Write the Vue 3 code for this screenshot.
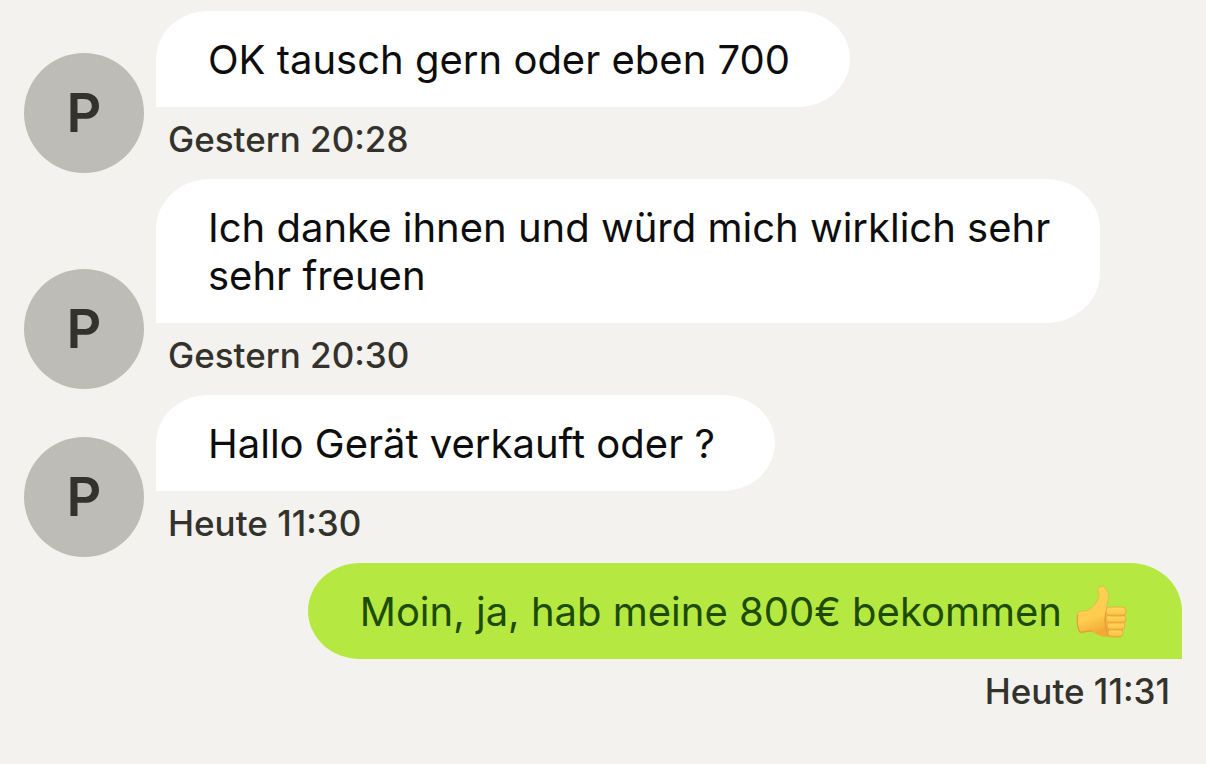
<script setup>
const messages = [
  { id: 1, own: false, text: 'OK tausch gern oder eben 700', time: 'Gestern 20:28' },
  { id: 2, own: false, text: 'Ich danke ihnen und würd mich wirklich sehr sehr freuen', time: 'Gestern 20:30' },
  { id: 3, own: false, text: 'Hallo Gerät verkauft oder ?', time: 'Heute 11:30' },
  { id: 4, own: true, text: 'Moin, ja, hab meine 800€ bekommen', thumb: true, time: 'Heute 11:31' },
]

const isLong = (m) => m.text.length > 40
</script>

<template>
  <main class="chat">
    <article v-for="m in messages" :key="m.id" class="row" :class="{ own: m.own }">
      <div v-if="!m.own" class="avatar">P</div>
      <div class="column">
        <p class="bubble" :class="{ long: isLong(m) }">
          <span>{{ m.text }}</span>
          <svg v-if="m.thumb" class="thumb" viewBox="0 0 52 54" role="img" aria-label="Daumen hoch">
            <defs>
              <linearGradient id="skin" x1="0" y1="0" x2="0.3" y2="1">
                <stop offset="0" stop-color="#ffd45c" />
                <stop offset="0.7" stop-color="#fecb4e" />
                <stop offset="1" stop-color="#f3a934" />
              </linearGradient>
              <linearGradient id="finger" x1="0" y1="0" x2="0" y2="1">
                <stop offset="0" stop-color="#ffd65e" />
                <stop offset="0.7" stop-color="#fdc84a" />
                <stop offset="1" stop-color="#efaa38" />
              </linearGradient>
            </defs>
            <path
              d="M2 27C5 25 10 27 14 24C19 20 22 16 23 11C23 7 21 5 22 3C23 1 27 1 29 3C32 6 33 10 32 15C31 19 30 22 31 25L36 29L38 49C33 53 24 52 18 47C13 45 9 48 4 48C1 45 0 31 2 27Z"
              fill="url(#skin)" stroke="#eaa93c" stroke-width="0.6" />
            <path d="M2 30C1 36 1 42 4 47C8 48 12 45 16 46" fill="none" stroke="#e09a35" stroke-width="1" />
            <path d="M31 25C28 31 29 43 32 51" fill="none" stroke="#e5a13a" stroke-width="1.6" />
            <rect x="32" y="44" width="15" height="8" rx="4" fill="url(#finger)" stroke="#e09a35" stroke-width="0.6" />
            <rect x="31" y="37" width="18" height="8" rx="4" fill="url(#finger)" stroke="#e09a35" stroke-width="0.6" />
            <rect x="30" y="30" width="20" height="8" rx="4" fill="url(#finger)" stroke="#e09a35" stroke-width="0.6" />
            <rect x="30" y="22" width="20" height="9" rx="4" fill="url(#finger)" stroke="#e09a35" stroke-width="0.6" />
          </svg>
        </p>
        <time class="time">{{ m.time }}</time>
      </div>
    </article>
  </main>
</template>

<style>
html,
body {
  background: #f3f2ee;
}
</style>

<style scoped>
.chat {
  display: flex;
  flex-direction: column;
  gap: 6px;
  padding: 11px 24px 24px;
  background: #f3f2ee;
  color: #33322d;
  font-family: Inter, "Liberation Sans", sans-serif;
}

.row {
  display: flex;
  align-items: flex-end;
  gap: 12px;
}

.row.own {
  justify-content: flex-end;
}

.avatar {
  flex: none;
  width: 120px;
  height: 120px;
  border-radius: 50%;
  background: #bdbcb7;
  font-size: 54px;
  font-weight: 600;
  line-height: 120px;
  text-align: center;
}

.column {
  flex: 1;
  min-width: 0;
  display: flex;
  flex-direction: column;
  align-items: flex-start;
}

.own .column {
  align-items: flex-end;
}

.bubble {
  max-width: 92%;
  box-sizing: border-box;
  margin: 0;
  padding: 25px 60px 23px 52px;
  border-radius: 54px 54px 54px 0 / 50px 50px 50px 0;
  background: #fff;
  color: #0d0d0d;
  font-size: 40px;
  line-height: 48px;
}

.bubble.long {
  padding-right: 44px;
}

.own .bubble {
  display: flex;
  align-items: center;
  gap: 14px;
  padding-right: 54px;
  border-radius: 54px 54px 0 54px / 50px 50px 0 50px;
  background: #b5e941;
  color: #1d4b00;
}

.thumb {
  flex: none;
  width: 52px;
  height: 54px;
  margin: -3px 0;
}

.time {
  padding: 8px 12px 10px;
  font-size: 35px;
  font-weight: 500;
  line-height: 48px;
}
</style>
